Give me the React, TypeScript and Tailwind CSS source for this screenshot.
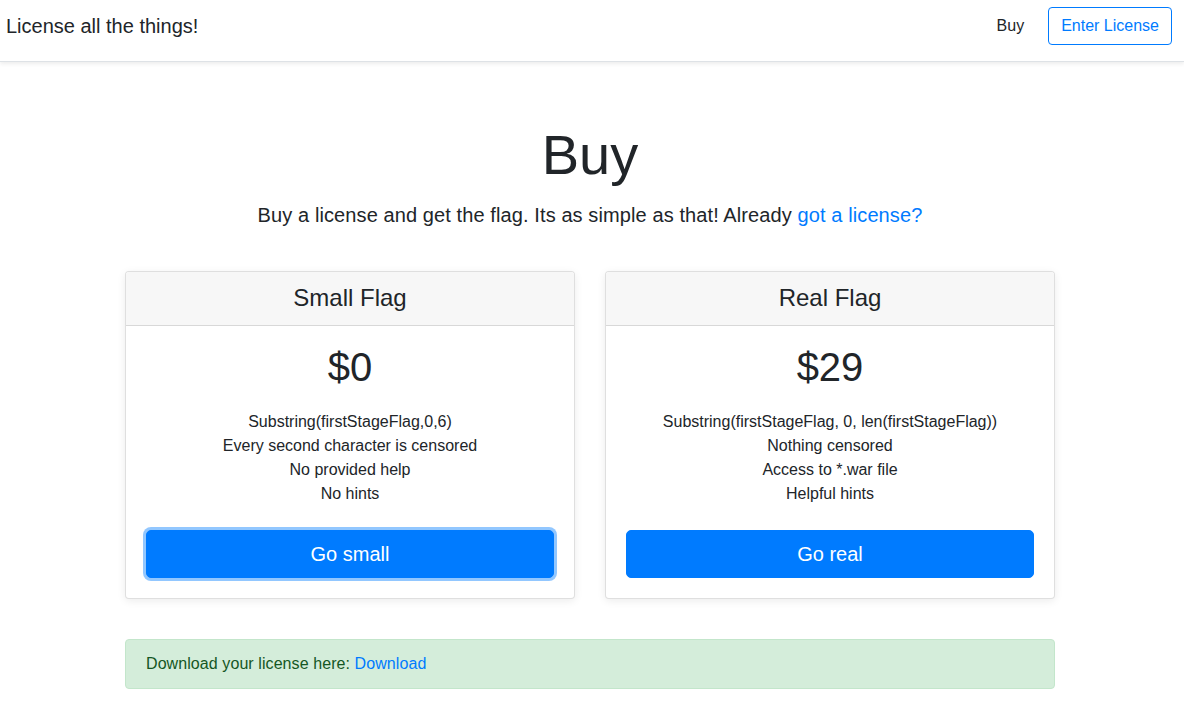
import React from "react";

const plans = [
  {
    title: "Small Flag",
    price: "$0",
    items: [
      "Substring(firstStageFlag,0,6)",
      "Every second character is censored",
      "No provided help",
      "No hints",
    ],
    button: "Go small",
    focused: true,
  },
  {
    title: "Real Flag",
    price: "$29",
    items: [
      "Substring(firstStageFlag, 0, len(firstStageFlag))",
      "Nothing censored",
      "Access to *.war file",
      "Helpful hints",
    ],
    button: "Go real",
    focused: false,
  },
];

export default function App() {
  return (
    <div
      className="min-h-[704px] bg-white text-[#212529] text-[16px] leading-[24px]"
      style={{ fontFamily: '"Liberation Sans", Arial, sans-serif' }}
    >
      <header className="flex items-center justify-between pl-[6px] pr-[12px] pt-[6px] pb-[15px] border-b border-[#dee2e6] bg-white shadow-[0_0.125rem_0.25rem_rgba(0,0,0,0.075)]">
        <h5 className="text-[20px] leading-[24px] font-normal m-0">License all the things!</h5>
        <nav className="flex items-center">
          <a className="p-2 mr-4 text-[#212529] cursor-pointer">Buy</a>
          <a className="h-[38px] px-[12px] flex items-center border border-[#007bff] rounded-[4px] text-[#007bff] cursor-pointer">
            Enter License
          </a>
        </nav>
      </header>

      <div className="w-[1180px] flex flex-col items-center">
        <h1 className="mt-[59px] text-[56px] leading-[67px] font-light">Buy</h1>
        <p className="mt-[12px] text-[20px] leading-[30px] font-light tracking-[0.1px]">
          Buy a license and get the flag. Its as simple as that! Already{" "}
          <a className="text-[#007bff] cursor-pointer">got a license?</a>
        </p>

        <div className="mt-[41px] w-[930px] grid grid-cols-2 gap-[30px]">
          {plans.map((p) => (
            <div
              key={p.title}
              className="border border-[rgba(0,0,0,0.125)] rounded-[4px] bg-white shadow-[0_0.125rem_0.5rem_rgba(0,0,0,0.08)] overflow-hidden"
            >
              <div className="bg-[#f7f7f7] border-b border-[rgba(0,0,0,0.125)] py-[12px] text-center">
                <h4 className="text-[24px] leading-[28.8px] font-normal">{p.title}</h4>
              </div>
              <div className="px-[20px] pt-[17px] pb-[20px] text-center">
                <h1 className="text-[40px] leading-[48px] font-normal">{p.price}</h1>
                <ul className="mt-[19px] mb-[24px]">
                  {p.items.map((it) => (
                    <li key={it}>{it}</li>
                  ))}
                </ul>
                <button
                  className={
                    "w-full h-[48px] rounded-[5px] bg-[#007bff] text-white text-[20px] leading-[30px] border border-[#007bff] " +
                    (p.focused ? "shadow-[0_0_0_3px_rgba(38,143,255,0.5)]" : "")
                  }
                >
                  {p.button}
                </button>
              </div>
            </div>
          ))}
        </div>

        <div className="mt-[40px] w-[930px] h-[50px] px-[20px] flex items-center bg-[#d4edda] border border-[#c3e6cb] rounded-[4px] text-[#155724]">
          <span className="tracking-[0.08px]">
            Download your license here: <a className="text-[#007bff] cursor-pointer">Download</a>
          </span>
        </div>
      </div>
    </div>
  );
}
